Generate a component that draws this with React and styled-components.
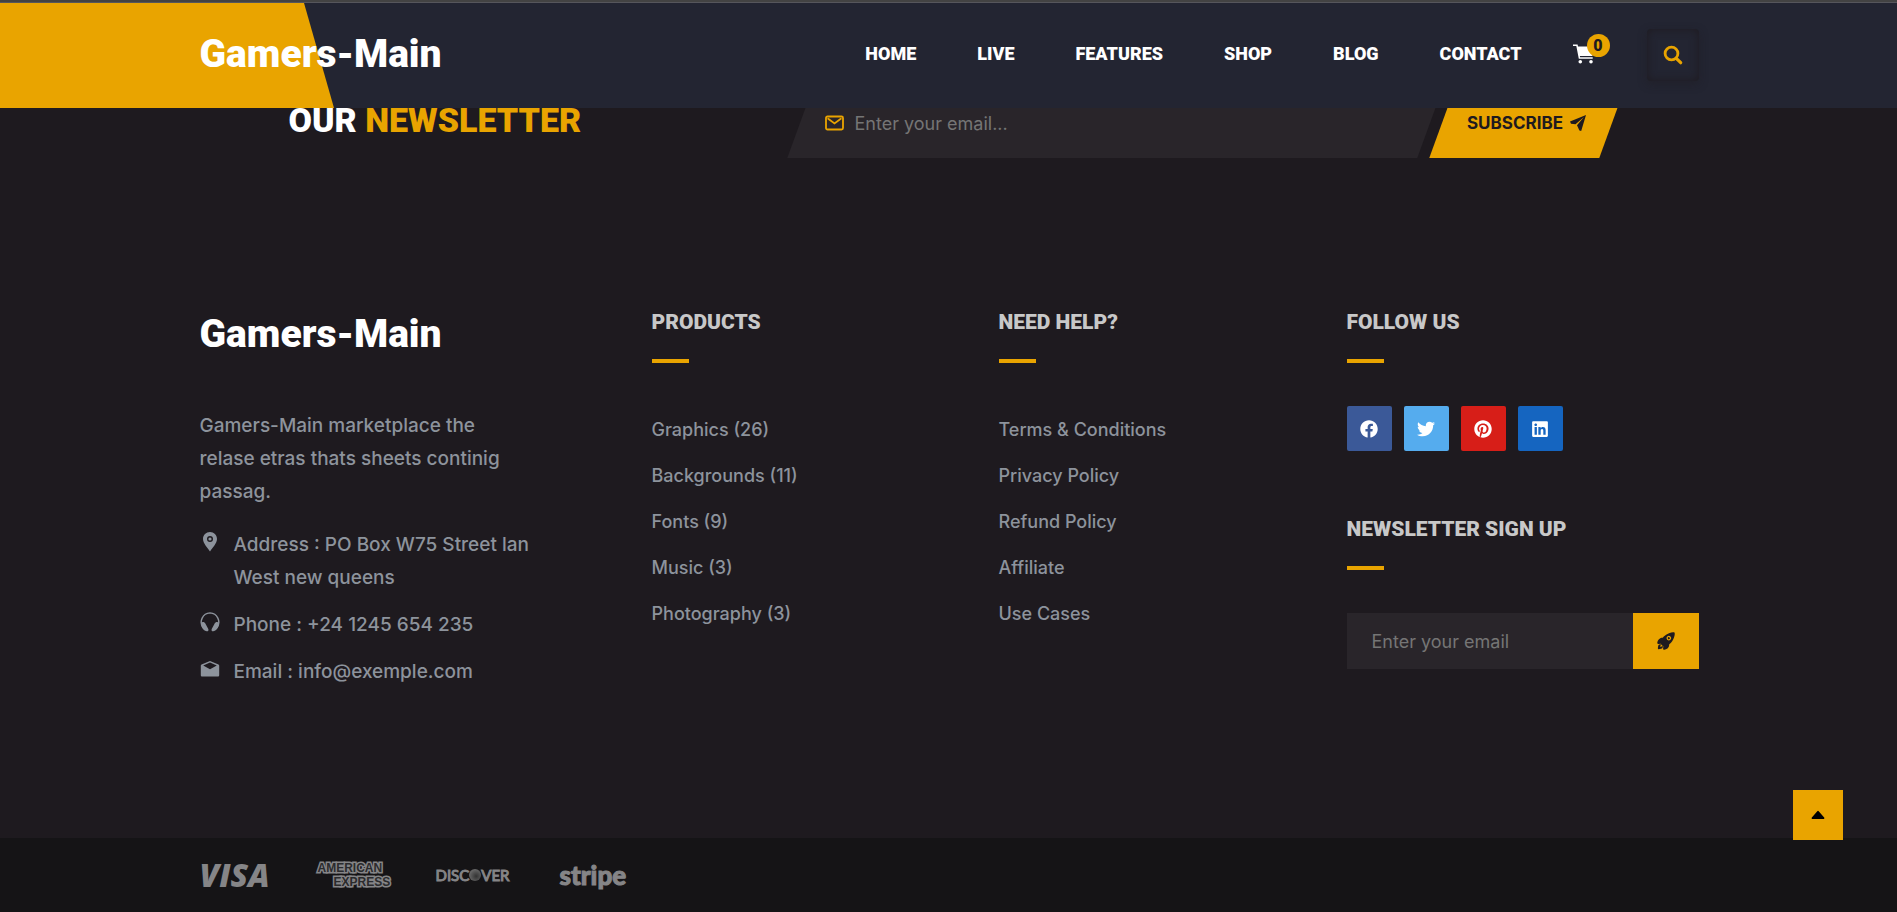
import React from "react";
import styled, { createGlobalStyle, css } from "styled-components";
import { FaFacebook, FaTwitter, FaPinterest, FaLinkedin } from "react-icons/fa";
import { IoRocket, IoCaretUp } from "react-icons/io5";

const gold = "#e9a400";
const ink = "#1e1a1f";
const field = "#29252a";
const muted = "#8d939c";
const display = `Roboto, "Liberation Sans", sans-serif`;

const GlobalStyle = createGlobalStyle`
  *, *::before, *::after { box-sizing: border-box; }
  body {
    margin: 0;
    background: ${ink};
    color: ${muted};
    font-family: Inter, "Liberation Sans", sans-serif;
    font-size: 18px;
  }
  a { color: inherit; text-decoration: none; }
  ul { list-style: none; margin: 0; padding: 0; }
  h2, h3, p { margin: 0; }
  input, button { font: inherit; border: 0; border-radius: 0; padding: 0; }
  button { cursor: pointer; }
  input::placeholder { color: #757575; opacity: 1; }
`;

const Page = styled.div`
  min-height: 100vh;
  display: flex;
  flex-direction: column;
`;

const Container = styled.div`
  width: 100%;
  max-width: 1500px;
  margin: 0 auto;
  padding-left: 1px;
`;

const Header = styled.header`
  position: sticky;
  top: 0;
  z-index: 10;
  height: 108px;
  border-top: 2px solid #434343;
  background: #232532;
  box-shadow: inset 0 1px #56565c;
  isolation: isolate;
  flex: none;

  &::before {
    content: "";
    position: absolute;
    inset: 1px auto 0 0;
    width: 334px;
    background: ${gold};
    clip-path: polygon(0 0, 304px 0, 100% 100%, 0 100%);
    z-index: -1;
  }
`;

const HeaderRow = styled(Container)`
  height: 100%;
  display: flex;
  align-items: center;
  justify-content: space-between;
  padding-bottom: 2px;
`;

const Logo = styled.a`
  display: block;
  color: #fff;
  font: 900 39px/44px ${display};
`;

const Nav = styled.nav`
  display: flex;
  align-items: center;
`;

const Menu = styled.ul`
  display: flex;
  gap: 61px;
  color: #fff;
  font: 900 18px/24px ${display};
  text-transform: uppercase;
`;

const CartButton = styled.button`
  position: relative;
  display: flex;
  margin-left: 51px;
  background: none;
  color: #fff;
`;

const Badge = styled.span`
  position: absolute;
  left: 14px;
  bottom: 7px;
  width: 23px;
  height: 23px;
  border-radius: 50%;
  background: ${gold};
  color: ${ink};
  font: 900 16px/23px ${display};
  text-align: center;
`;

const SearchButton = styled.button`
  display: grid;
  place-items: center;
  width: 52px;
  height: 52px;
  margin: 2px 0 0 53px;
  border-radius: 4px;
  background: transparent;
  color: ${gold};
  box-shadow: 0 3px 10px rgba(30, 26, 31, 0.4), inset 0 0 10px rgba(30, 26, 31, 0.9);
`;

const Main = styled.main`
  flex: none;
`;

const Newsletter = styled(Container)`
  display: flex;
  align-items: flex-start;
  justify-content: space-between;
  height: 70px;
  margin-top: -20px;
  padding: 0 87px 0 90px;
`;

const NewsletterTitle = styled.h2`
  margin-top: 12px;
  color: #fff;
  font: 900 34px/40px ${display};
  text-transform: uppercase;
  em { color: ${gold}; font-style: normal; }
`;

const NewsletterForm = styled.form`
  display: flex;
  gap: 12px;
  width: 812px;
`;

const slanted = css`
  position: relative;
  isolation: isolate;
  display: flex;
  align-items: center;
  height: 70px;

  &::before {
    content: "";
    position: absolute;
    inset: 0;
    z-index: -1;
    transform: skewX(-20deg);
    background: ${(p) => p.$fill};
  }
`;

const SlantedField = styled.label`
  ${slanted}
  flex: 1;
  gap: 11px;
  padding-left: 25px;
  color: ${gold};
`;

const SlantedButton = styled.button`
  ${slanted}
  justify-content: center;
  gap: 7px;
  width: 170px;
  background: none;
  color: ${ink};
  font-size: 17px;
  font-weight: 700;
  text-transform: uppercase;
`;

const BareInput = styled.input`
  flex: 1;
  min-width: 0;
  background: none;
  color: #fff;
`;

const Footer = styled.footer`
  flex: 1;
  display: flex;
  flex-direction: column;
  justify-content: space-between;
`;

const FooterGrid = styled(Container)`
  display: grid;
  grid-template-columns: 452px 347px 348px minmax(0, 1fr);
  padding-top: 149px;
`;

const About = styled.div`
  padding-top: 5px;
  font-size: 19px;
  font-weight: 500;
  line-height: 33px;
`;

const AboutText = styled.p`
  max-width: 325px;
  margin-top: 53px;
`;

const ContactList = styled.ul`
  display: flex;
  flex-direction: column;
  gap: 14px;
  margin-top: 20px;
`;

const ContactItem = styled.li`
  display: flex;
  align-items: flex-start;
  gap: 14px;
  max-width: 350px;
  svg { flex: none; margin-top: 4px; }
`;

const Column = styled.div`
  display: flex;
  flex-direction: column;
  gap: 63px;
`;

const BlockTitle = styled.h3`
  color: #c8c8c8;
  font: 900 21px/30px ${display};
  text-transform: uppercase;

  &::after {
    content: "";
    display: block;
    width: 37px;
    height: 4px;
    margin: 22px 0 43px;
    background: ${gold};
  }
`;

const LinkList = styled.ul`
  display: flex;
  flex-direction: column;
  gap: 16px;
  line-height: 30px;
  font-weight: 500;
  padding-top: 9px;
`;

const Socials = styled.ul`
  display: flex;
  gap: 12px;
`;

const SocialLink = styled.a`
  display: grid;
  place-items: center;
  width: 45px;
  height: 45px;
  border-radius: 2px;
  background: ${(p) => p.$color};
  color: #fff;
  font-size: 18px;
`;

const SignUp = styled.form`
  display: flex;
  height: 56px;
  padding-left: 25px;
  background: ${field};
`;

const SignUpButton = styled.button`
  display: grid;
  place-items: center;
  width: 66px;
  background: ${gold};
  color: ${ink};
  font-size: 20px;
`;

const PaymentBar = styled.div`
  background: #151416;
`;

const Payments = styled(Container)`
  display: flex;
  align-items: center;
  height: 74px;
  color: #858587;
`;

const Brand = styled.span`
  flex: none;
  width: ${(p) => p.$width};
`;

const Visa = styled(Brand)`
  font: italic 800 32px/30px "Open Sans", sans-serif;
`;

const Amex = styled(Brand)`
  color: #2b2b2d;
  font: 700 12px/14px "Liberation Sans", sans-serif;
  -webkit-text-stroke: 3px #858587;
  paint-order: stroke fill;
  span { display: block; }
  span + span { padding-left: 16px; }
`;

const Discover = styled(Brand)`
  display: flex;
  align-items: center;
  font: 400 15px/20px Lato, sans-serif;
  -webkit-text-stroke: 1px #858587;
`;

const DiscoverO = styled.span`
  border-radius: 50%;
  background: radial-gradient(circle at 60% 60%, #333 0, #777 90%);
  color: transparent;
  line-height: 12px;
  -webkit-text-stroke: 0;
`;

const Stripe = styled(Brand)`
  font: 900 26px/30px Lato, sans-serif;
  -webkit-text-stroke: 1px #858587;
`;

const BackToTop = styled.button`
  position: fixed;
  right: 54px;
  bottom: 72px;
  display: grid;
  place-items: center;
  width: 50px;
  height: 50px;
  background: ${gold};
  color: #000;
`;

const CartIcon = () => (
  <svg width="21" height="20" viewBox="0 0 21 20" fill="currentColor" aria-hidden="true">
    <path d="M0 .5h4.600l.4 2H21l-1.600 9.500H6.800l.3 1.300h12.600v1.500H5.800L3.300 2H0z" />
    <circle cx="7.300" cy="17.800" r="1.800" />
    <circle cx="18" cy="17.800" r="1.800" />
  </svg>
);

const SearchIcon = () => (
  <svg width="20" height="20" viewBox="0 0 20 20" fill="none" stroke="currentColor" aria-hidden="true">
    <circle cx="8.500" cy="8.500" r="6.400" strokeWidth="2.800" />
    <path d="M13.300 13.300l4.400 4.400" strokeWidth="3.200" strokeLinecap="round" />
  </svg>
);

const MailIcon = () => (
  <svg width="19" height="16" viewBox="0 0 19 16" fill="none" stroke="currentColor" strokeWidth="1.800" aria-hidden="true">
    <rect x="1" y="1.500" width="17" height="13" rx="1.500" />
    <path d="M3.200 3.800l6.300 4.700 6.300-4.700" strokeLinecap="round" />
  </svg>
);

const PlaneIcon = () => (
  <svg width="16" height="16" viewBox="0 0 16 16" fill="currentColor" aria-hidden="true">
    <path d="M16 0L0 6.500l1 2.200 4.500.6L14 2 7 10.200l2.400 5.300 1.800.5z" />
  </svg>
);

const PinIcon = () => (
  <svg width="20" height="20" viewBox="0 0 20 20" fill="currentColor" aria-hidden="true">
    <path fillRule="evenodd" d="M10 0c3.900 0 7 3 7 6.900 0 4.300-4.500 8.500-7 12.600C7.500 15.400 3 11.200 3 6.900 3 3 6.100 0 10 0zm0 4a3 3 0 100 6 3 3 0 000-6z" />
    <circle cx="10" cy="7" r="1.600" />
  </svg>
);

const HeadphonesIcon = () => (
  <svg width="20" height="20" viewBox="0 0 20 20" fill="currentColor" aria-hidden="true">
    <path d="M3 15.500A9.200 9.200 0 0 1 10 .9a9.200 9.200 0 0 1 7 14.600" fill="none" stroke="currentColor" strokeWidth="1.400" />
    <path d="M1 10.500c2-1 3.500-.6 4.600 1.400l2.700 5c.5 1.300-.1 2.400-1.500 2.400-2.800 0-6-4-5.800-8.800zM19 10.500c-2-1-3.500-.6-4.600 1.400l-2.700 5c-.5 1.300.1 2.400 1.500 2.400 2.800 0 6-4 5.800-8.800z" />
  </svg>
);

const OpenMailIcon = () => (
  <svg width="20" height="20" viewBox="0 0 20 20" fill="currentColor" aria-hidden="true">
    <path fillRule="evenodd" d="M10 2l8.500 3.500c.4.200.7.600.7 1.100v9.600c0 .8-.6 1.400-1.400 1.400H2.200c-.8 0-1.400-.6-1.400-1.400V6.600c0-.5.300-.9.700-1.100zm0 1.500L3.200 6.600 10 10.300l6.800-3.700z" />
  </svg>
);

const menu = ["Home", "Live", "Features", "Shop", "Blog", "Contact"];
const products = ["Graphics (26)", "Backgrounds (11)", "Fonts (9)", "Music (3)", "Photography (3)"];
const help = ["Terms & Conditions", "Privacy Policy", "Refund Policy", "Affiliate", "Use Cases"];
const contacts = [
  [PinIcon, "Address : PO Box W75 Street lan West new queens"],
  [HeadphonesIcon, "Phone : +24 1245 654 235"],
  [OpenMailIcon, "Email : info@exemple.com"],
];
const socials = [
  ["Facebook", "#3b5998", FaFacebook],
  ["Twitter", "#55acee", FaTwitter],
  ["Pinterest", "#d71e18", FaPinterest],
  ["LinkedIn", "#1565c0", FaLinkedin],
];

const Links = ({ title, items }) => (
  <section>
    <BlockTitle>{title}</BlockTitle>
    <LinkList>
      {items.map((t) => (
        <li key={t}><a href="#">{t}</a></li>
      ))}
    </LinkList>
  </section>
);

export default function App() {
  return (
    <Page>
      <GlobalStyle />
      <Header>
        <HeaderRow>
          <Logo href="#">Gamers-Main</Logo>
          <Nav>
            <Menu>
              {menu.map((t) => (
                <li key={t}><a href="#">{t}</a></li>
              ))}
            </Menu>
            <CartButton aria-label="Cart"><CartIcon /><Badge>0</Badge></CartButton>
            <SearchButton aria-label="Search"><SearchIcon /></SearchButton>
          </Nav>
        </HeaderRow>
      </Header>
      <Main>
        <Newsletter>
          <NewsletterTitle>Our <em>Newsletter</em></NewsletterTitle>
          <NewsletterForm>
            <SlantedField $fill={field}>
              <MailIcon />
              <BareInput type="email" aria-label="Email" placeholder="Enter your email..." />
            </SlantedField>
            <SlantedButton type="button" $fill={gold}>Subscribe <PlaneIcon /></SlantedButton>
          </NewsletterForm>
        </Newsletter>
      </Main>
      <Footer>
        <FooterGrid>
          <About>
            <Logo href="#">Gamers-Main</Logo>
            <AboutText>Gamers-Main marketplace the relase etras thats sheets continig passag.</AboutText>
            <ContactList>
              {contacts.map(([Icon, text]) => (
                <ContactItem key={text}><Icon /><span>{text}</span></ContactItem>
              ))}
            </ContactList>
          </About>
          <Links title="Products" items={products} />
          <Links title="Need help?" items={help} />
          <Column>
            <section>
              <BlockTitle>Follow us</BlockTitle>
              <Socials>
                {socials.map(([name, color, Icon]) => (
                  <li key={name}><SocialLink href="#" aria-label={name} $color={color}><Icon /></SocialLink></li>
                ))}
              </Socials>
            </section>
            <section>
              <BlockTitle>Newsletter sign up</BlockTitle>
              <SignUp>
                <BareInput type="email" aria-label="Email" placeholder="Enter your email" />
                <SignUpButton type="button" aria-label="Sign up"><IoRocket /></SignUpButton>
              </SignUp>
            </section>
          </Column>
        </FooterGrid>
        <PaymentBar>
          <Payments>
            <Visa $width="118px">VISA</Visa>
            <Amex $width="118px"><span>AMERICAN</span><span>EXPRESS</span></Amex>
            <Discover $width="124px">DISC<DiscoverO>O</DiscoverO>VER</Discover>
            <Stripe $width="70px">stripe</Stripe>
          </Payments>
        </PaymentBar>
      </Footer>
      <BackToTop aria-label="Back to top"><IoCaretUp size={20} /></BackToTop>
    </Page>
  );
}
